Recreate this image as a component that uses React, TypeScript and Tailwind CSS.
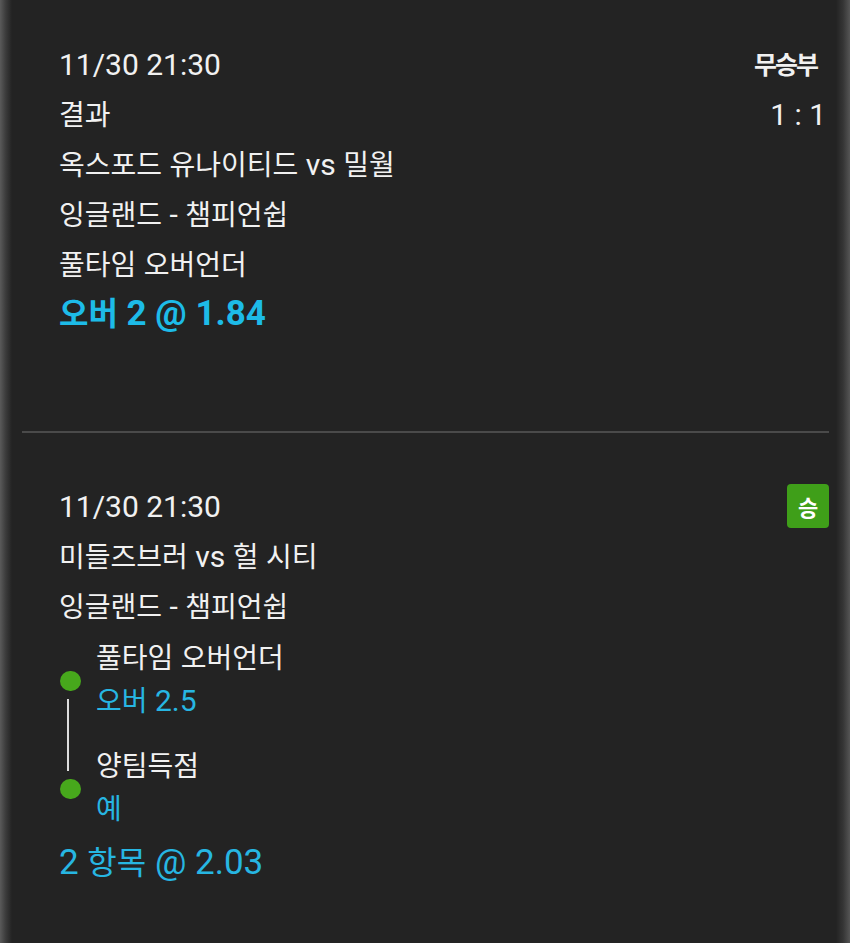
import React from "react";

const HANGUL = /([\uAC00-\uD7A3]+)/;

// Hangul runs get their own size so they sit beside the Roboto text correctly
function Mixed({ text, k }: { text: string; k: string }) {
  return (
    <span>
      {text.split(HANGUL).map((part, i) =>
        HANGUL.test(part) ? (
          <span key={i} className={k}>
            {part}
          </span>
        ) : (
          <React.Fragment key={i}>{part}</React.Fragment>
        )
      )}
    </span>
  );
}

const ko = "font-['Noto_Sans_CJK_KR'] text-[28px] tracking-[0px]";
const koBig = "font-['Noto_Sans_CJK_KR'] text-[32px] tracking-[0px]";

function Line({
  text,
  className = "",
  big = false,
}: {
  text: string;
  className?: string;
  big?: boolean;
}) {
  return (
    <div className={`h-[50px] flex items-center whitespace-nowrap ${className}`}>
      <Mixed text={text} k={big ? koBig : ko} />
    </div>
  );
}

const legs = [
  { market: "풀타임 오버언더", pick: "오버 2.5" },
  { market: "양팀득점", pick: "예" },
];

export default function App() {
  return (
    <div className="min-h-[943px] flex bg-[#232323] text-[#f1f1f1] font-['Roboto','Noto_Sans_CJK_KR',sans-serif] text-[30px]">
      {/* left edge */}
      <div className="w-[12px] bg-gradient-to-r from-[#5a5a5a] via-[#3a3a3a] to-[#232323]" />

      <div className="flex-1 flex flex-col">
        {/* first bet */}
        <section className="pl-[47px] pr-[10px] pt-[39px] pb-[92px]">
          <div className="flex items-center justify-between">
            <Line text="11/30 21:30" />
            <span className="mr-[9px] font-['Noto_Sans_CJK_KR'] font-bold text-[25px] tracking-[-2px]">
              무승부
            </span>
          </div>
          <div className="flex items-center justify-between">
            <Line text="결과" />
            <span>1 : 1</span>
          </div>
          <Line text="옥스포드 유나이티드 vs 밀월" />
          <Line text="잉글랜드 - 챔피언쉽" />
          <Line text="풀타임 오버언더" />
          <Line
            text="오버 2 @ 1.84"
            big
            className="font-bold text-[35px] text-[#1dbbe8]"
          />
        </section>

        <div className="ml-[10px] mr-[7px] h-[2px] bg-[#4a4a4a]" />

        {/* second bet */}
        <section className="pl-[47px] pr-[7px] pt-[48px] pb-[40px]">
          <div className="flex items-center justify-between">
            <Line text="11/30 21:30" />
            <span className="w-[42px] h-[44px] rounded-[4px] bg-[#3f9f19] flex items-center justify-center font-['Noto_Sans_CJK_KR'] font-bold text-[22px] text-white">
              승
            </span>
          </div>
          <Line text="미들즈브러 vs 헐 시티" />
          <Line text="잉글랜드 - 챔피언쉽" />

          <div className="flex flex-col gap-[22px] pt-[5px]">
            {legs.map((leg, i) => (
              <div key={leg.market} className="relative flex items-center">
                <div className="w-[37px] flex justify-center -ml-[7px] mr-[7px] pt-[4px]">
                  <span className="w-[21px] h-[20px] rounded-full bg-[#47a81c]" />
                </div>
                {i === 0 && (
                  <span className="absolute left-[8px] top-[63px] w-[2px] h-[72px] bg-[#dcdcdc]" />
                )}
                <div>
                  <div className="h-[43px] flex items-center whitespace-nowrap">
                    <Mixed text={leg.market} k={ko} />
                  </div>
                  <div className="h-[43px] flex items-center whitespace-nowrap text-[#27b6e2]">
                    <Mixed text={leg.pick} k={ko} />
                  </div>
                </div>
              </div>
            ))}
          </div>

          <Line
            text="2 항목 @ 2.03"
            big
            className="mt-[8px] text-[35px] text-[#27b6e2]"
          />
        </section>
      </div>

      {/* right edge */}
      <div className="w-[14px] bg-gradient-to-r from-[#232323] via-[#353535] to-[#555555]" />
    </div>
  );
}
